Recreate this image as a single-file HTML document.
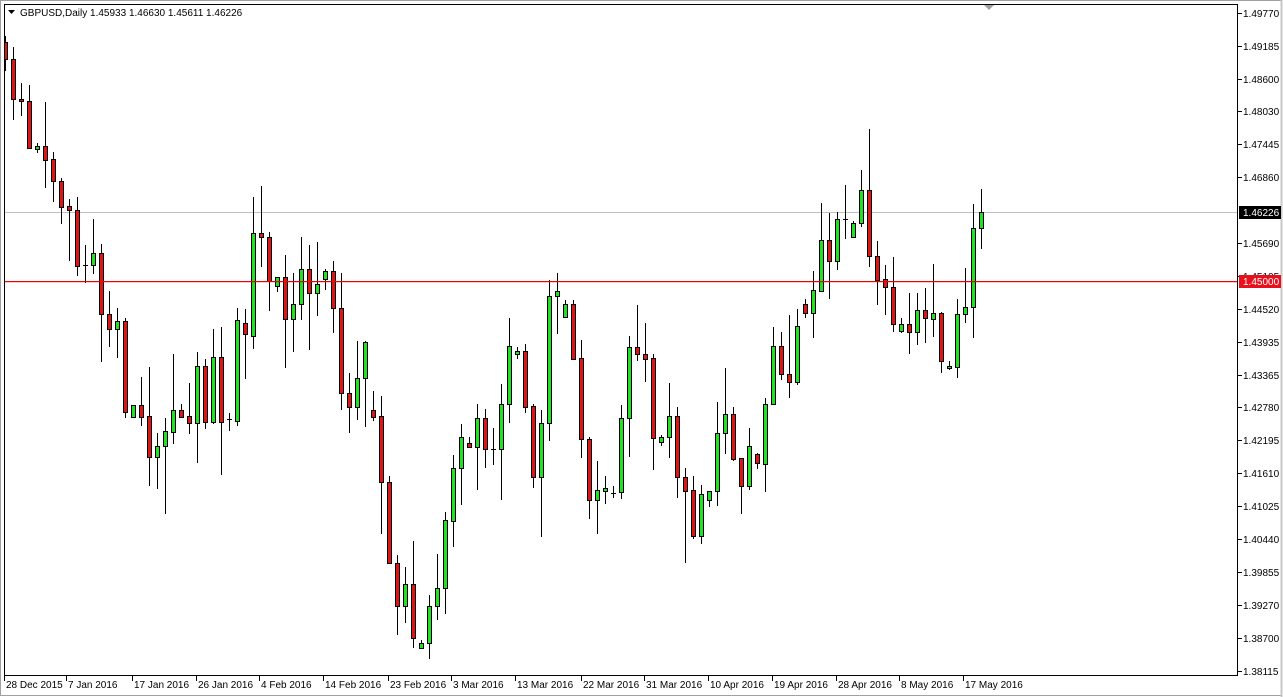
<!DOCTYPE html>
<html><head><meta charset="utf-8"><style>
html,body{margin:0;padding:0;background:#fff;}
body{width:1283px;height:697px;overflow:hidden;position:relative;font-family:"Liberation Sans",sans-serif;}
svg{position:absolute;left:0;top:0;}
text{font-family:"Liberation Sans",sans-serif;font-size:10px;fill:#000;}
</style></head><body>
<svg id="s" width="1283" height="697" viewBox="0 0 1283 697">
<rect x="0" y="0" width="1283" height="697" fill="#fff"/>
<rect x="0.5" y="0.5" width="1281" height="695" fill="none" stroke="#a0a0a0"/>
<line x1="1281.5" y1="0" x2="1281.5" y2="697" stroke="#c8c8c8" stroke-width="2"/>
<line x1="4" y1="212.5" x2="1238" y2="212.5" stroke="#c0c0c0"/>
<g id="c"></g>
<rect x="4" y="281" width="1234" height="1.2" fill="#ee0000"/>
<rect x="4.5" y="4.5" width="1233" height="671" fill="none" stroke="#000"/>
<polygon points="984,5 994,5 989,10" fill="#a0a0a0"/>
<polygon points="8,10 15,10 11.5,14" fill="#000"/>
<text x="20" y="16">GBPUSD,Daily  1.45933 1.46630 1.45611 1.46226</text>
<g id="ax"></g>
<rect x="1239" y="206" width="42" height="13" fill="#000"/>
<text x="1243" y="216" style="fill:#fff">1.46226</text>
<rect x="1239" y="275" width="42" height="13" fill="#e8101c"/>
<text x="1243" y="285" style="fill:#fff">1.45000</text>
<g id="dt"></g>
</svg>
<script>
var d="r 42 59 36 70|r 59 99 47 119|r 99 101 83 115|r 101 148 85 148|g 146 149 143 152|r 146 160 102 187|r 159 181 152 201|r 181 207 178 223|r 206 210 199 260|r 210 266 197 275|d 265 265 245 282|g 253 265 219 273|r 253 314 244 361|r 314 329 291 346|g 321 329 308 357|r 321 412 318 417|g 405 417 405 417|r 405 417 377 425|r 416 457 367 485|g 446 457 433 488|g 431 446 418 513|g 410 432 354 443|r 410 417 404 417|r 416 423 383 433|g 366 423 352 462|r 366 422 359 428|g 357 422 329 423|r 357 422 327 474|d 419 419 413 430|g 320 421 308 425|r 323 334 309 378|g 233 336 197 348|r 233 237 186 266|r 237 281 232 310|g 277 286 277 291|r 277 319 255 367|g 304 319 273 351|g 269 304 237 319|r 269 293 245 349|g 284 293 242 315|g 271 279 269 289|r 271 308 261 332|r 308 393 273 409|r 393 407 373 432|g 378 407 341 419|g 342 378 341 426|r 410 417 391 420|r 416 482 396 533|r 482 563 476 563|r 563 606 555 634|g 584 606 567 622|r 584 638 541 647|g 643 648 640 648|g 606 643 595 658|g 588 606 554 619|g 520 588 512 613|g 468 521 455 546|g 437 468 424 504|r 443 447 437 447|g 418 447 404 489|r 418 449 409 467|d 449 449 428 464|g 404 449 384 499|g 346 404 318 422|g 351 354 347 358|r 351 407 344 412|r 406 477 404 487|g 423 477 410 536|g 296 423 280 440|g 291 296 273 333|g 304 317 300 317|r 304 359 300 359|r 358 439 340 457|r 439 500 437 518|g 490 500 461 533|g 488 491 476 503|d 493 493 486 497|g 418 492 405 498|g 347 418 336 456|r 347 354 305 360|r 354 359 323 381|r 358 438 354 469|g 437 442 435 445|g 416 437 383 457|r 416 477 407 497|r 477 491 468 562|r 490 536 476 538|g 494 536 485 543|g 491 500 491 506|g 433 491 402 505|g 414 433 368 453|r 414 459 407 460|r 458 486 458 513|g 446 486 428 489|r 454 463 453 468|g 404 464 398 491|g 346 404 327 404|r 346 374 332 379|r 374 382 315 397|g 326 382 309 384|r 304 313 299 317|g 290 313 271 337|g 240 291 203 291|r 240 261 213 298|g 219 261 212 269|d 219 219 185 238|g 223 237 221 237|g 190 223 170 226|r 190 256 129 266|r 256 280 241 304|r 279 287 265 314|r 287 324 257 331|g 324 331 318 332|r 324 332 293 353|g 310 332 293 344|r 310 318 288 342|g 313 319 264 336|r 313 361 312 372|g 366 368 361 369|g 314 367 299 377|g 307 314 268 322|g 228 307 204 337|g 212 228 189 248".split("|");
var h="";
d.forEach(function(s,i){var a=s.split(" "),t=a[0],bt=+a[1],bb=+a[2],wt=+a[3],wb=+a[4];var x=5+8*i;
h+='<line x1="'+(x+0.5)+'" y1="'+wt+'" x2="'+(x+0.5)+'" y2="'+(wb+1)+'" stroke="#000"/>';
if(t=="d"){h+='<line x1="'+(x-2)+'" y1="'+(bt+0.5)+'" x2="'+(x+3)+'" y2="'+(bt+0.5)+'" stroke="#000"/>';}
else{var hh=Math.max(bb-bt,2);h+='<rect x="'+(x-1.5)+'" y="'+(bt+0.5)+'" width="4" height="'+hh+'" fill="'+(t=="g"?"#22e022":"#dd1515")+'" stroke="#000"/>';}
});
h='<svg x="4" y="4" width="1234" height="672" viewBox="4 4 1234 672" overflow="hidden">'+h+'</svg>';
document.getElementById("c").innerHTML=h;
var p=[["1.49770",13],["1.49185",46],["1.48600",79],["1.48030",111],["1.47445",144],["1.46860",177],["1.45690",243],["1.45105",276],["1.44520",309],["1.43935",342],["1.43365",375],["1.42780",407],["1.42195",440],["1.41610",473],["1.41025",506],["1.40440",539],["1.39855",572],["1.39270",605],["1.38700",638],["1.38115",671]];
var a="";p.forEach(function(q){a+='<line x1="1238" y1="'+(q[1]+0.5)+'" x2="1242" y2="'+(q[1]+0.5)+'" stroke="#000"/><text x="1243" y="'+(q[1]+4)+'">'+q[0]+'</text>';});
document.getElementById("ax").innerHTML=a;
var dl=[["28 Dec 2015",5],["7 Jan 2016",67],["17 Jan 2016",133],["26 Jan 2016",197],["4 Feb 2016",260],["14 Feb 2016",324],["23 Feb 2016",389],["3 Mar 2016",452],["13 Mar 2016",516],["22 Mar 2016",582],["31 Mar 2016",645],["10 Apr 2016",709],["19 Apr 2016",773],["28 Apr 2016",837],["8 May 2016",900],["17 May 2016",964]];
var b="";dl.forEach(function(q){b+='<line x1="'+(q[1]-0.5)+'" y1="676" x2="'+(q[1]-0.5)+'" y2="681" stroke="#000"/><text x="'+(q[1]+1)+'" y="688">'+q[0]+'</text>';});
document.getElementById("dt").innerHTML=b;
</script>
</body></html>
